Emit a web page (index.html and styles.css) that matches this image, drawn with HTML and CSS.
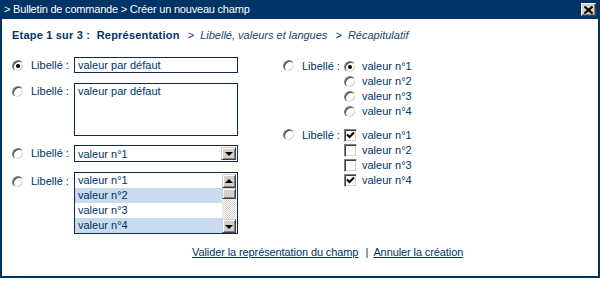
FILE: index.html
```html
<!DOCTYPE html>
<html lang="fr">
<head>
<meta charset="utf-8">
<title>Créer un nouveau champ</title>
<link rel="stylesheet" href="styles.css">
</head>
<body>
<div class="window">
  <div class="titlebar">
    <span class="title">&gt; Bulletin de commande &gt; Créer un nouveau champ</span>
    <span class="close"><svg width="9" height="8" viewBox="0 0 9 8"><path d="M0.5 0.5 L8.5 7.5 M8.5 0.5 L0.5 7.5" stroke="#000" stroke-width="2"/></svg></span>
  </div>
  <div class="content">
    <div class="steps">
      <b class="current">Etape 1 sur 3 :&nbsp; Représentation</b>
      <span class="sep">&gt;</span>
      <i class="next">Libellé, valeurs et langues</i>
      <span class="sep">&gt;</span>
      <i class="next">Récapitulatif</i>
    </div>
    <div class="form">
      <div class="col col-left">
        <div class="row row-input">
          <span class="radio checked"></span>
          <span class="label">Libellé :</span>
          <span class="field input">valeur par défaut</span>
        </div>
        <div class="row row-textarea">
          <span class="radio"></span>
          <span class="label">Libellé :</span>
          <span class="field textarea">valeur par défaut</span>
        </div>
        <div class="row row-select">
          <span class="radio"></span>
          <span class="label">Libellé :</span>
          <span class="field select">
            <span class="select-value">valeur n°1</span>
            <span class="btn btn-down"><span class="arrow down"></span></span>
          </span>
        </div>
        <div class="row row-list">
          <span class="radio"></span>
          <span class="label">Libellé :</span>
          <span class="field listbox">
            <span class="items">
              <span class="item">valeur n°1</span>
              <span class="item sel">valeur n°2</span>
              <span class="item">valeur n°3</span>
              <span class="item sel">valeur n°4</span>
            </span>
            <span class="scrollbar">
              <span class="btn sb-btn"><span class="arrow up"></span></span>
              <span class="btn thumb"></span>
              <span class="track"></span>
              <span class="btn sb-btn"><span class="arrow down"></span></span>
            </span>
          </span>
        </div>
      </div>
      <div class="col col-right">
        <div class="row group">
          <span class="radio rmain"></span>
          <span class="label">Libellé :</span>
          <div class="options">
            <div class="opt"><span class="radio checked"></span><span>valeur n°1</span></div>
            <div class="opt"><span class="radio"></span><span>valeur n°2</span></div>
            <div class="opt"><span class="radio"></span><span>valeur n°3</span></div>
            <div class="opt"><span class="radio"></span><span>valeur n°4</span></div>
          </div>
        </div>
        <div class="row group group-check">
          <span class="radio rmain"></span>
          <span class="label">Libellé :</span>
          <div class="options">
            <div class="opt"><span class="check"><svg width="9" height="9" viewBox="0 0 9 9"><path d="M1 3.5 L3.5 6 L8 1.5" stroke="#000" stroke-width="2" fill="none"/></svg></span><span>valeur n°1</span></div>
            <div class="opt"><span class="check"></span><span>valeur n°2</span></div>
            <div class="opt"><span class="check"></span><span>valeur n°3</span></div>
            <div class="opt"><span class="check"><svg width="9" height="9" viewBox="0 0 9 9"><path d="M1 3.5 L3.5 6 L8 1.5" stroke="#000" stroke-width="2" fill="none"/></svg></span><span>valeur n°4</span></div>
          </div>
        </div>
      </div>
    </div>
    <div class="actions">
      <a href="#">Valider la représentation du champ</a>
      <span class="pipe">|</span>
      <a href="#">Annuler la création</a>
    </div>
  </div>
</div>
</body>
</html>
```

FILE: styles.css
```css
* { box-sizing: border-box; }
html, body { margin: 0; padding: 0; background: #fff; }
body {
  font-family: "Liberation Sans", Arial, sans-serif;
  font-size: 11px;
  color: #003366;
}
.window {
  width: 600px;
  height: 278px;
  border: 2px solid #003366;
  border-top: 0;
  display: flex;
  flex-direction: column;
}
.titlebar {
  height: 19px;
  margin: 0 -2px;
  background: #003366;
  color: #fff;
  display: flex;
  align-items: center;
  justify-content: space-between;
  padding: 0 3px 1px 4px;
}
.title { font-size: 11px; line-height: 15px; letter-spacing: -0.2px; }
.close {
  width: 15px;
  height: 13px;
  margin-top: 1px;
  margin-right: 1px;
  background: #d4d0c8;
  border: 1px solid;
  border-color: #fff #404040 #404040 #fff;
  box-shadow: inset -1px -1px #808080;
  display: flex;
  align-items: center;
  justify-content: center;
}
.close svg { display: block; }
.content {
  flex: 1;
  padding: 9px 0 0 10px;
  display: flex;
  flex-direction: column;
}
.steps { line-height: 15px; white-space: nowrap; }
.steps .current { font-weight: bold; letter-spacing: 0.2px; }
.steps .sep { margin: 0 3px 0 5px; }
.steps .next { color: #1a4472; }
.form {
  margin-top: 14px;
  display: flex;
  gap: 45px;
}
.col { display: flex; flex-direction: column; }
.col-left { width: 226px; }
.row { display: flex; align-items: flex-start; }
.row + .row { margin-top: 10px; }
.row-select { margin-top: 9px !important; }
.label {
  width: 43px;
  padding-top: 1px;
  line-height: 15px;
  white-space: nowrap;
}
.radio {
  flex: none;
  width: 12px;
  height: 12px;
  margin: 3px 7px 0 0;
  border-radius: 50%;
  background: #fff;
  border: 1px solid;
  border-color: #808080 #fff #fff #808080;
  box-shadow: inset 1px 1px #404040, inset -1px -1px #d4d0c8;
  position: relative;
}
.radio.checked::after {
  content: "";
  position: absolute;
  left: 3px;
  top: 3px;
  width: 4px;
  height: 4px;
  border-radius: 50%;
  background: #000;
}
.field {
  width: 164px;
  border: 1px solid #0a2a52;
  background: #fff;
  padding: 0 3px;
  line-height: 14px;
  white-space: nowrap;
}
.input { height: 16px; }
.textarea { height: 53px; line-height: 15px; }
.select {
  height: 17px;
  display: flex;
  justify-content: space-between;
  align-items: center;
  padding: 0 1px 0 3px;
}
.btn {
  background: #d4d0c8;
  border: 1px solid;
  border-color: #d4d0c8 #404040 #404040 #d4d0c8;
  box-shadow: inset 1px 1px #fff, inset -1px -1px #808080;
  display: flex;
  align-items: center;
  justify-content: center;
}
.btn-down { width: 15px; height: 13px; }
.arrow { width: 0; height: 0; border-left: 4px solid transparent; border-right: 4px solid transparent; }
.arrow.down { border-top: 4px solid #000; margin-top: 1px; }
.arrow.up { border-bottom: 4px solid #000; margin-bottom: 1px; }
.listbox {
  height: 62px;
  padding: 0;
  display: flex;
  line-height: 15px;
}
.row-list .label { padding-top: 0; margin-top: 2px; }
.row-list .radio { margin-top: 4px; }
.items { flex: 1; display: flex; flex-direction: column; }
.item { height: 15px; padding-left: 3px; }
.item.sel { background: #c8dbed; }
.scrollbar {
  width: 15px;
  display: flex;
  flex-direction: column;
  padding: 1px 1px 0 0;
}
.sb-btn { height: 14px; }
.thumb { height: 11px; }
.track {
  flex: 1;
  background: repeating-conic-gradient(#d4d0c8 0 25%, #fff 0 50%) 0 0 / 2px 2px;
}
.col-right { width: 200px; }
.col-right .row + .row { margin-top: 7px; }
.col-right .label { width: 42px; padding-top: 2px; }
.col-right .rmain { margin-top: 3px; }
.options { display: flex; flex-direction: column; padding-top: 2px; }
.opt { display: flex; align-items: center; height: 15px; line-height: 15px; }
.opt .radio { margin: 0 6px 0 0; }
.check {
  flex: none;
  width: 13px;
  height: 13px;
  margin-right: 5px;
  background: #fff;
  border: 1px solid;
  border-color: #808080 #fff #fff #808080;
  box-shadow: inset 1px 1px #404040, inset -1px -1px #d4d0c8;
  display: flex;
  align-items: center;
  justify-content: center;
}
.check svg { display: block; }
.actions {
  margin-top: 11px;
  padding-left: 180px;
  line-height: 15px;
  white-space: nowrap;
}
.actions a { color: #003366; text-decoration: underline; letter-spacing: -0.1px; }
.pipe { margin: 0 2px 0 4px; }
```
